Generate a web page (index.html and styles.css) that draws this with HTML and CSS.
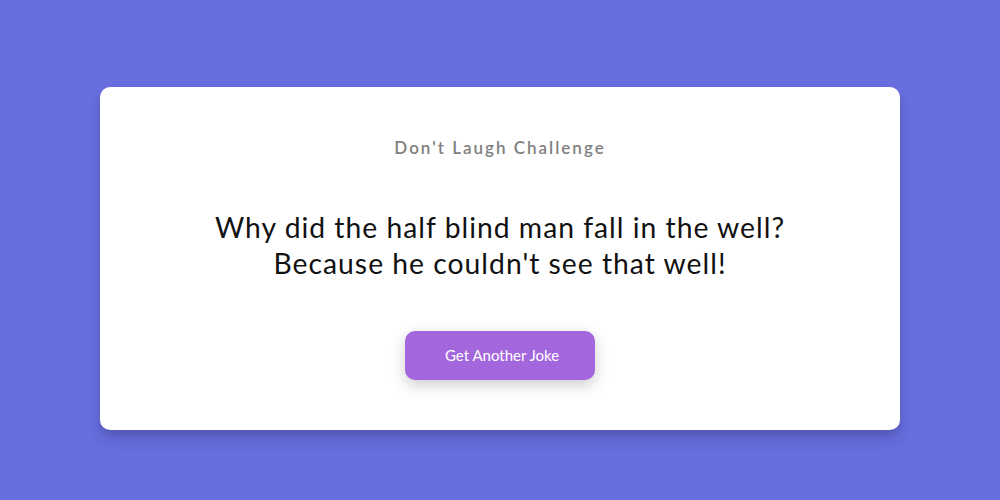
FILE: index.html
```html
<!DOCTYPE html>
<html lang="en">
<head>
<meta charset="UTF-8">
<title>Don't Laugh Challenge</title>
<link rel="stylesheet" href="styles.css">
</head>
<body>
  <div class="container">
    <h3 class="title">Don't Laugh Challenge</h3>
    <div class="joke">Why did the half blind man fall in the well? Because he couldn't see that well!</div>
    <button class="btn">Get Another Joke</button>
  </div>
</body>
</html>
```

FILE: styles.css
```css
* { box-sizing: border-box; }
html, body { margin: 0; }
body {
  background: #686de0;
  font-family: "Lato", "Noto Sans", sans-serif;
  height: 500px;
  display: flex;
  justify-content: center;
  align-items: flex-start;
  padding-top: 87px;
}
.container {
  background: #fff;
  border-radius: 10px;
  box-shadow: 0 10px 20px rgba(0,0,0,0.1), 0 6px 6px rgba(0,0,0,0.1);
  padding: 50px 20px;
  width: 800px;
  text-align: center;
}
.title {
  margin: 0;
  font-size: 17px;
  line-height: 22px;
  font-weight: 600;
  letter-spacing: 2px;
  color: #808080;
}
.joke {
  font-size: 28.3px;
  line-height: 36px;
  letter-spacing: 1px;
  color: #111;
  margin: 50px auto;
  max-width: 600px;
}
.btn {
  font-family: inherit;
  background: #a466dd;
  color: #fff;
  border: 0;
  border-radius: 10px;
  box-shadow: 0 5px 15px rgba(0,0,0,0.2);
  padding: 14px 40px;
  font-size: 15px;
  line-height: 21px;
  width: 190px;
  white-space: nowrap;
}
```
